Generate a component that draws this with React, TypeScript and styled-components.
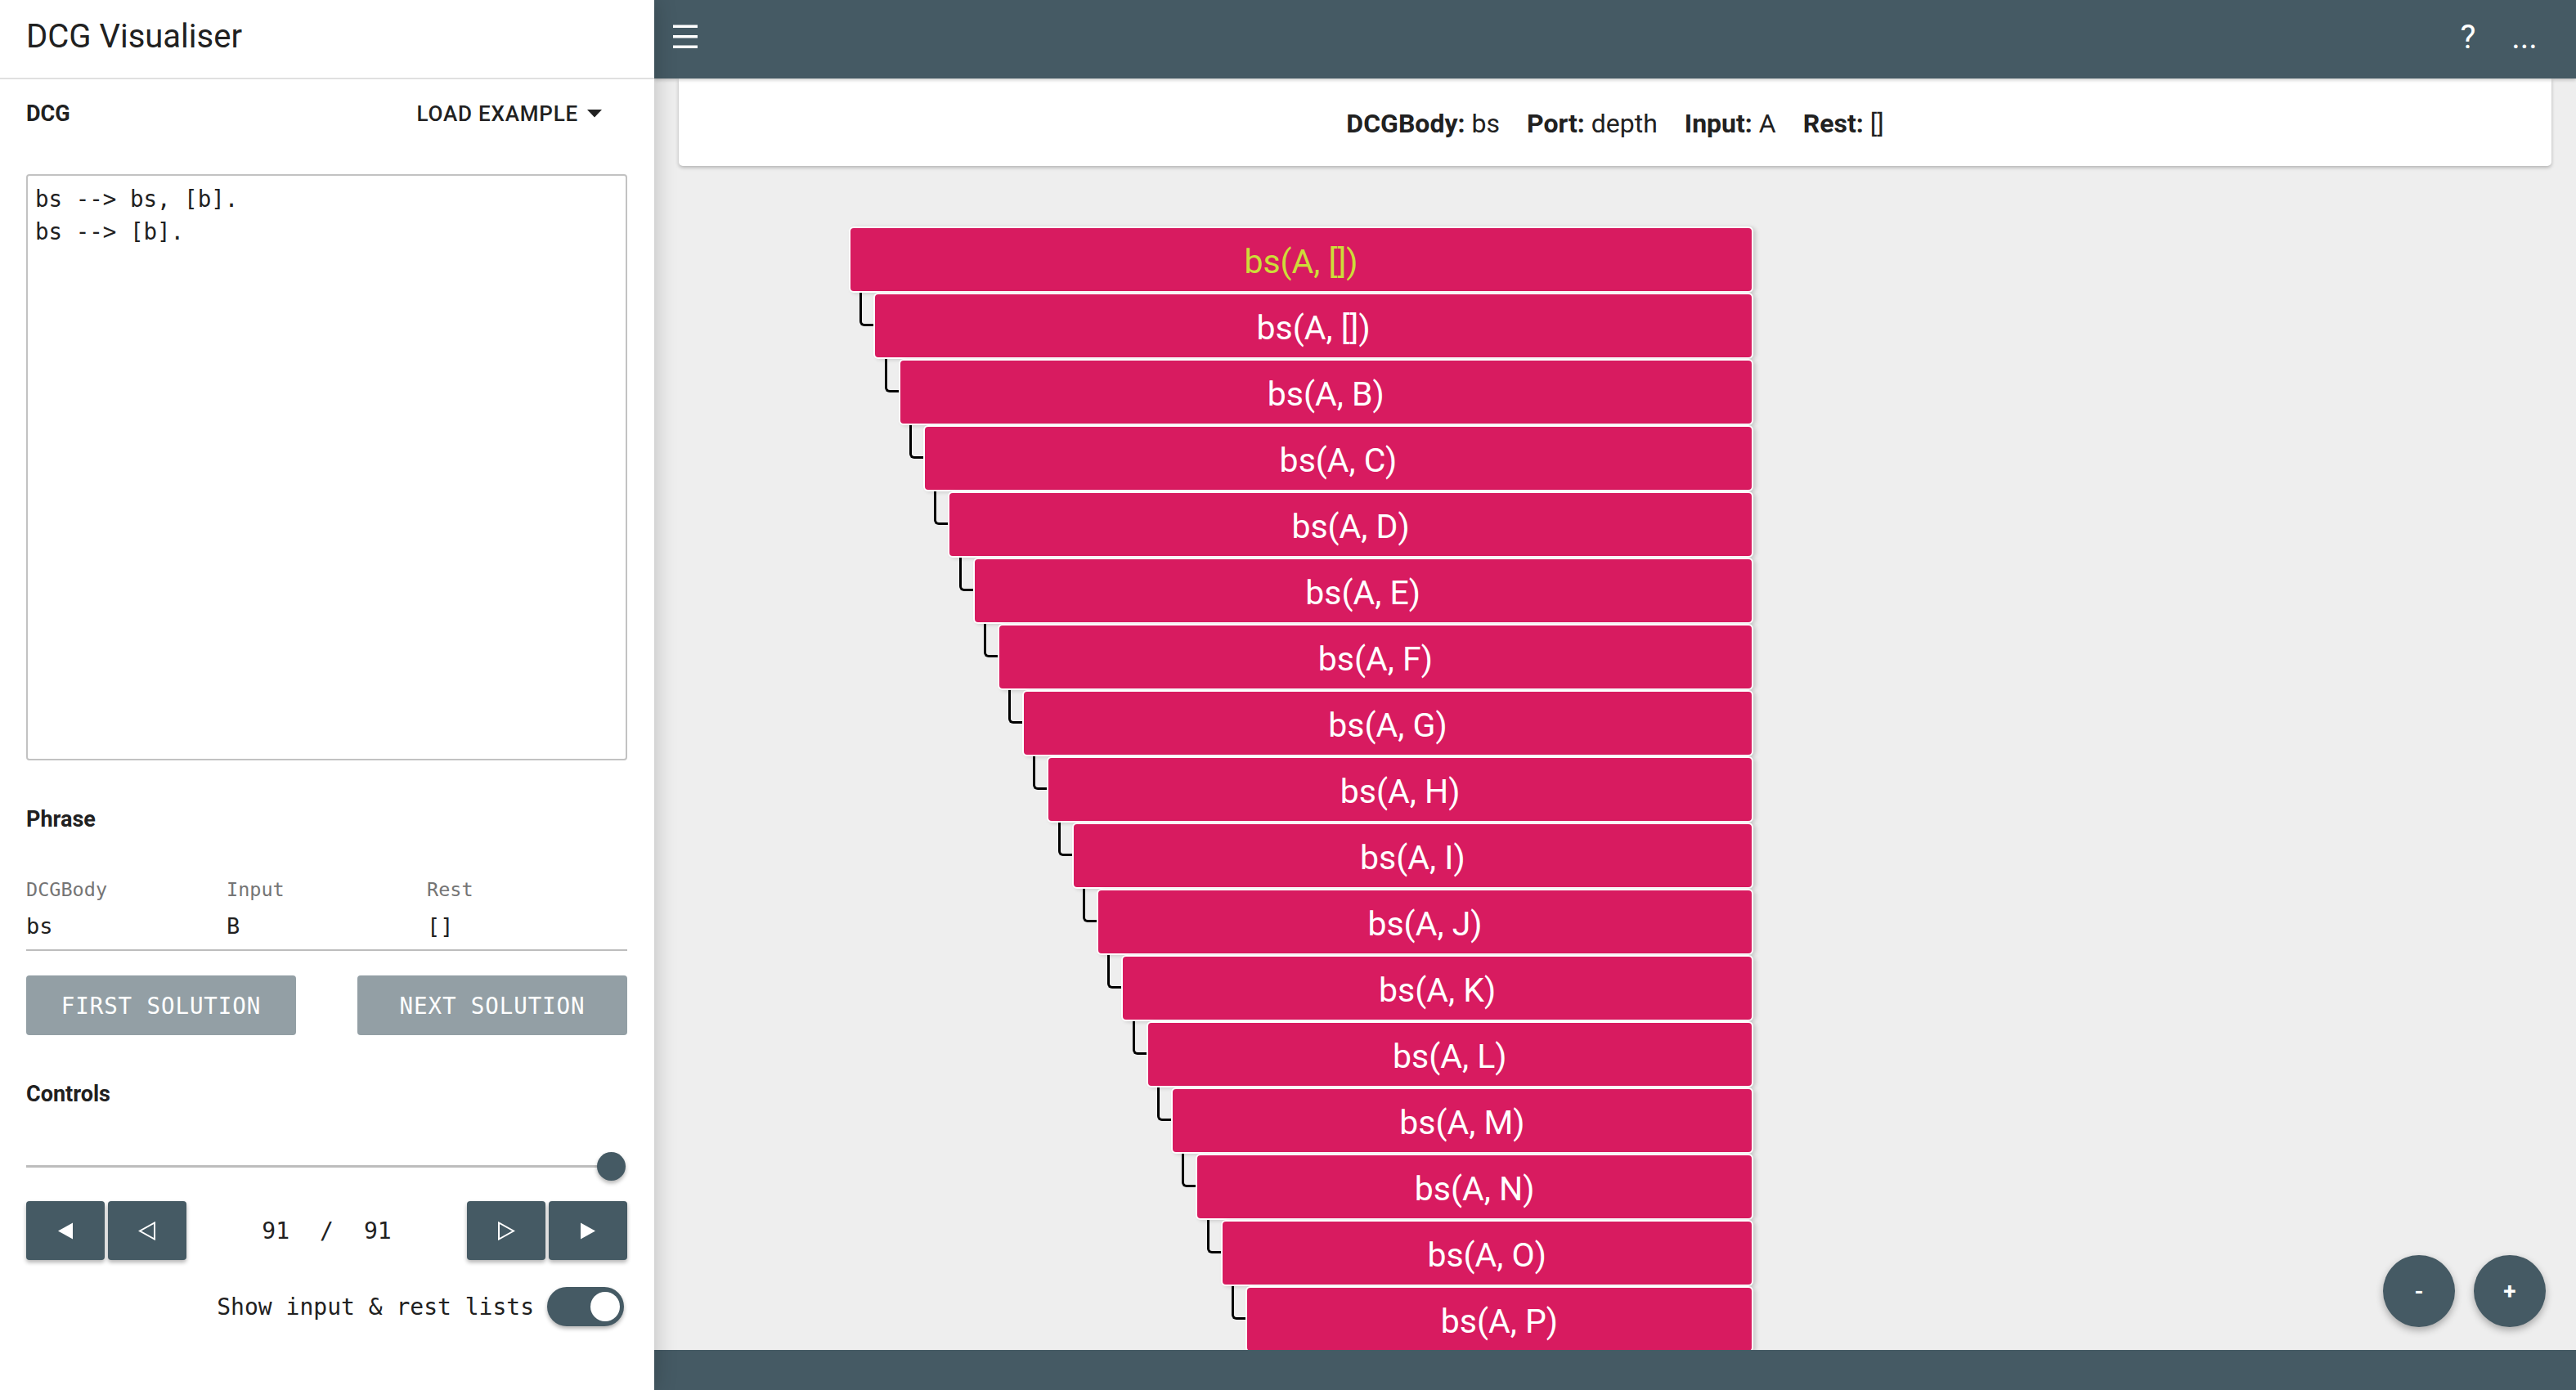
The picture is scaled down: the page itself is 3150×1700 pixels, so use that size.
import React from "react";
import styled, { createGlobalStyle } from "styled-components";

const BLUE_GREY = "#455a64";
const PINK = "#d81b60";
const LIME = "#cddc39";
const TEXT = "#212121";
const MONO = `"DejaVu Sans Mono", "Liberation Mono", monospace`;
const SANS = `Roboto, "Noto Sans", sans-serif`;
const INDENT = 30.3;

const GlobalStyle = createGlobalStyle`
    html, body {
        margin: 0;
        height: 100%;
        overflow: hidden;
        font-family: ${SANS};
    }
    #root {
        height: 100%;
    }
`;

const LEAVES = ["[]", "[]", "B", "C", "D", "E", "F", "G", "H", "I", "J", "K", "L", "M", "N", "O", "P"];

type NavIconProps = { dir: "left" | "right"; filled: boolean };

const NavIcon: React.FC<NavIconProps> = ({ dir, filled }) => {
    const points = dir === "left" ? "20,1.5 20,21.5 2,11.5" : "2,1.5 2,21.5 20,11.5";
    return (
        <svg width="22" height="23" viewBox="0 0 22 23">
            <polygon
                points={points}
                fill={filled ? "#fff" : "none"}
                stroke="#fff"
                strokeWidth={filled ? 0 : 2}
                strokeLinejoin="miter"
            />
        </svg>
    );
};

export default function App() {
    return (
        <>
            <GlobalStyle />
            <Layout>
                <Sidebar>
                    <SidebarHeader>DCG Visualiser</SidebarHeader>
                    <SidebarBody>
                        <SectionHeaderRow>
                            <SectionTitle>DCG</SectionTitle>
                            <LoadButton>
                                Load example
                                <svg width="18" height="10" viewBox="0 0 18 10">
                                    <polygon points="0,0 18,0 9,9.5" fill={TEXT} />
                                </svg>
                            </LoadButton>
                        </SectionHeaderRow>
                        <CodeArea
                            spellCheck={false}
                            defaultValue={"bs --> bs, [b].\nbs --> [b]."}
                        />

                        <PhraseLabel>Phrase</PhraseLabel>
                        <PhraseTable>
                            <HeadCell>DCGBody</HeadCell>
                            <HeadCell>Input</HeadCell>
                            <HeadCell>Rest</HeadCell>
                            <ValueCell>bs</ValueCell>
                            <ValueCell>B</ValueCell>
                            <ValueCell>[]</ValueCell>
                        </PhraseTable>
                        <ButtonRow>
                            <SolutionButton>First solution</SolutionButton>
                            <SolutionButton>Next solution</SolutionButton>
                        </ButtonRow>

                        <ControlsLabel>Controls</ControlsLabel>
                        <Slider>
                            <SliderTrack />
                            <SliderThumb />
                        </Slider>
                        <NavRow>
                            <NavGroup>
                                <NavButton><NavIcon dir="left" filled /></NavButton>
                                <NavButton><NavIcon dir="left" filled={false} /></NavButton>
                            </NavGroup>
                            <Counter>
                                <span>91</span>
                                <span>/</span>
                                <span>91</span>
                            </Counter>
                            <NavGroup>
                                <NavButton><NavIcon dir="right" filled={false} /></NavButton>
                                <NavButton><NavIcon dir="right" filled /></NavButton>
                            </NavGroup>
                        </NavRow>
                        <ToggleRow>
                            <ToggleLabel>Show input &amp; rest lists</ToggleLabel>
                            <Switch>
                                <SwitchThumb />
                            </Switch>
                        </ToggleRow>
                    </SidebarBody>
                </Sidebar>

                <Main>
                    <TopBar>
                        <svg width="30" height="30" viewBox="0 0 30 30">
                            <rect x="0" y="0.5" width="30" height="3.5" fill="#fff" />
                            <rect x="0" y="13" width="30" height="3.5" fill="#fff" />
                            <rect x="0" y="25.5" width="30" height="3.5" fill="#fff" />
                        </svg>
                        <Spacer />
                        <BarAction>?</BarAction>
                        <BarAction>...</BarAction>
                    </TopBar>

                    <Content>
                        <InfoCard>
                            <InfoItem><b>DCGBody:</b> bs</InfoItem>
                            <InfoItem><b>Port:</b> depth</InfoItem>
                            <InfoItem><b>Input:</b> A</InfoItem>
                            <InfoItem><b>Rest:</b> []</InfoItem>
                        </InfoCard>

                        <Tree>
                            {LEAVES.map((leaf, i) => (
                                <TreeNode key={i} $depth={i} $root={i === 0}>
                                    {i > 0 && <Connector />}
                                    bs(A, {leaf})
                                </TreeNode>
                            ))}
                        </Tree>

                        <ZoomControls>
                            <Fab>-</Fab>
                            <Fab>+</Fab>
                        </ZoomControls>
                    </Content>

                    <Footer />
                </Main>
            </Layout>
        </>
    );
}

const Layout = styled.div`
    display: flex;
    height: 100vh;
`;

/* ---------- sidebar ---------- */

const Sidebar = styled.aside`
    width: 800px;
    flex: none;
    display: flex;
    flex-direction: column;
    background: #fff;
    position: relative;
    z-index: 2;
    box-shadow: 0 0 26px rgba(0, 0, 0, 0.22);
`;

const SidebarHeader = styled.header`
    height: 97px;
    box-sizing: border-box;
    display: flex;
    align-items: center;
    padding: 0 32px 6px;
    border-bottom: 2px solid #e0e0e0;
    font-size: 40px;
    color: ${TEXT};
`;

const SidebarBody = styled.div`
    display: flex;
    flex-direction: column;
    padding: 0 33px 0 32px;
`;

const SectionHeaderRow = styled.div`
    height: 84px;
    display: flex;
    align-items: center;
    justify-content: space-between;
`;

const SectionTitle = styled.div`
    font-size: 27px;
    font-weight: 700;
    line-height: 40px;
    color: ${TEXT};
`;

const LoadButton = styled.div`
    display: flex;
    align-items: center;
    gap: 11px;
    padding-right: 31px;
    font-size: 26px;
    font-weight: 500;
    letter-spacing: 0.8px;
    text-transform: uppercase;
    color: ${TEXT};
`;

const CodeArea = styled.textarea`
    margin-top: 32px;
    height: 717px;
    box-sizing: border-box;
    padding: 8px 9px;
    border: 2px solid #c2c2c2;
    border-radius: 4px;
    resize: none;
    outline: none;
    font-family: ${MONO};
    font-size: 27.5px;
    line-height: 40px;
    color: ${TEXT};
`;

const PhraseLabel = styled(SectionTitle)`
    margin-top: 52px;
`;

const ControlsLabel = styled(SectionTitle)`
    margin-top: 52px;
`;

const PhraseTable = styled.div`
    display: grid;
    grid-template-columns: repeat(3, 1fr);
    margin-top: 48px;
    padding-bottom: 8px;
    border-bottom: 2px solid #bdbdbd;
`;

const HeadCell = styled.div`
    font-family: ${MONO};
    font-size: 23.5px;
    line-height: 36px;
    color: #757575;
`;

const ValueCell = styled.div`
    padding-top: 7px;
    font-family: ${MONO};
    font-size: 27px;
    line-height: 40px;
    color: ${TEXT};
`;

const ButtonRow = styled.div`
    display: flex;
    justify-content: space-between;
    margin-top: 30px;
`;

const SolutionButton = styled.button`
    width: 330px;
    height: 73px;
    border: none;
    border-radius: 4px;
    background: #939fa5;
    color: #fff;
    font-family: ${MONO};
    font-size: 27.5px;
    letter-spacing: 0.9px;
    text-transform: uppercase;
`;

const Slider = styled.div`
    display: flex;
    align-items: center;
    height: 40px;
    margin-top: 48px;
`;

const SliderTrack = styled.div`
    flex: 1;
    height: 3px;
    background: #bdbdbd;
`;

const SliderThumb = styled.div`
    width: 35px;
    height: 35px;
    margin: 0 2px 0 -17px;
    border-radius: 50%;
    background: ${BLUE_GREY};
    box-shadow: 0 3px 5px rgba(0, 0, 0, 0.3);
`;

const NavRow = styled.div`
    display: flex;
    align-items: center;
    margin-top: 23px;
`;

const NavGroup = styled.div`
    display: flex;
    gap: 4px;
`;

const NavButton = styled.div`
    width: 96px;
    height: 72px;
    display: flex;
    align-items: center;
    justify-content: center;
    border-radius: 4px;
    background: ${BLUE_GREY};
    box-shadow: 0 3px 5px rgba(0, 0, 0, 0.3);
`;

const Counter = styled.div`
    flex: 1;
    display: flex;
    justify-content: center;
    gap: 37px;
    font-family: ${MONO};
    font-size: 28px;
    color: ${TEXT};
`;

const ToggleRow = styled.div`
    display: flex;
    justify-content: flex-end;
    align-items: center;
    gap: 16px;
    margin-top: 33px;
    padding-right: 4px;
`;

const ToggleLabel = styled.span`
    font-family: ${MONO};
    font-size: 28px;
    color: ${TEXT};
`;

const Switch = styled.div`
    width: 94px;
    height: 48px;
    box-sizing: border-box;
    display: flex;
    align-items: center;
    justify-content: flex-end;
    padding-right: 5px;
    border-radius: 24px;
    background: ${BLUE_GREY};
    box-shadow: 0 3px 5px rgba(0, 0, 0, 0.3);
`;

const SwitchThumb = styled.div`
    width: 36px;
    height: 36px;
    border-radius: 50%;
    background: #fff;
`;

/* ---------- main ---------- */

const Main = styled.main`
    flex: 1;
    min-width: 0;
    display: flex;
    flex-direction: column;
    background: #eeeeee;
`;

const TopBar = styled.div`
    height: 96px;
    flex: none;
    box-sizing: border-box;
    display: flex;
    align-items: center;
    padding: 0 33px 6px 23px;
    background: ${BLUE_GREY};
    color: #fff;
    position: relative;
    z-index: 1;
    box-shadow: 0 2px 4px rgba(0, 0, 0, 0.2);
`;

const Spacer = styled.div`
    flex: 1;
`;

const BarAction = styled.div`
    width: 60px;
    text-align: center;
    font-size: 40px;
    margin-left: 9px;
`;

const Content = styled.div`
    flex: 1;
    position: relative;
    overflow: hidden;
    padding: 0 30px;
`;

const InfoCard = styled.div`
    height: 107px;
    box-sizing: border-box;
    padding-top: 3px;
    display: flex;
    align-items: center;
    justify-content: center;
    gap: 33px;
    background: #fff;
    border-radius: 0 0 5px 5px;
    box-shadow: 0 2px 4px rgba(0, 0, 0, 0.25);
    font-size: 32px;
    color: ${TEXT};

    b {
        font-weight: 700;
    }
`;

const InfoItem = styled.span`
    white-space: pre;
`;

const Tree = styled.div`
    width: 1106px;
    margin: 74px 0 0 208px;
`;

const TreeNode = styled.div<{ $depth: number; $root?: boolean }>`
    position: relative;
    height: 81px;
    box-sizing: border-box;
    margin-left: ${(p) => p.$depth * INDENT}px;
    padding-top: 4px;
    display: flex;
    align-items: center;
    justify-content: center;
    border: 2px solid #fff;
    border-radius: 6px;
    background: ${PINK};
    box-shadow: 3px 1px 5px rgba(0, 0, 0, 0.16);
    font-size: 41px;
    color: ${(p) => (p.$root ? LIME : "#fff")};
`;

const Connector = styled.span`
    position: absolute;
    left: -19px;
    top: -2px;
    width: 17px;
    height: 41px;
    box-sizing: border-box;
    border-left: 3px solid #000;
    border-bottom: 3px solid #000;
    border-bottom-left-radius: 6px;
`;

const ZoomControls = styled.div`
    position: absolute;
    right: 37px;
    bottom: 28px;
    display: flex;
    gap: 23px;
`;

const Fab = styled.div`
    width: 88px;
    height: 88px;
    display: flex;
    align-items: center;
    justify-content: center;
    border-radius: 50%;
    background: ${BLUE_GREY};
    box-shadow: 0 4px 10px rgba(0, 0, 0, 0.3);
    color: #fff;
    font-size: 28px;
    font-weight: 700;
`;

const Footer = styled.footer`
    height: 49px;
    flex: none;
    background: ${BLUE_GREY};
`;
